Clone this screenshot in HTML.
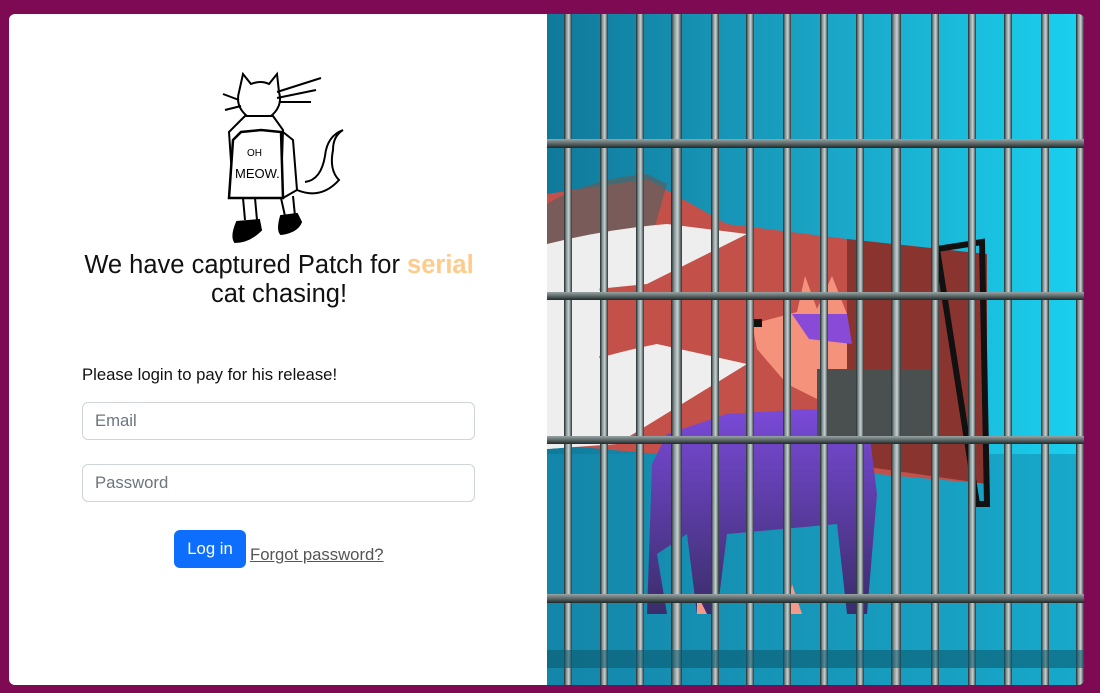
<!DOCTYPE html>
<html><head><meta charset="utf-8"><style>
html,body{margin:0;padding:0}
body{width:1100px;height:693px;background:#7d0a52;position:relative;overflow:hidden;font-family:"Liberation Sans","DejaVu Sans",sans-serif}
.card{position:absolute;left:9px;top:14px;width:1075px;height:671px;background:#fff;border-radius:6px;overflow:hidden}
.right{position:absolute;left:538px;top:0;width:537px;height:671px}
h1{position:absolute;left:40px;width:460px;top:237px;margin:0;text-align:center;font-weight:normal;font-size:25.5px;line-height:29px;color:#111}
h1 span{color:#fecb8b;font-weight:bold}
.p{position:absolute;left:73px;top:351px;font-size:16.7px;color:#111}
.in{position:absolute;left:73px;width:393px;height:38px;border:1px solid #ced4da;border-radius:6px;box-sizing:border-box;padding:0 12px;font-size:16.7px;line-height:36px;color:#6c757d}
.btn{position:absolute;left:165px;top:516px;width:72px;height:38px;background:#0d6efd;border-radius:6px;color:#fff;font-size:16.7px;line-height:38px;text-align:center}
.fp{position:absolute;left:241px;top:531px;font-size:16.7px;color:#555;text-decoration:underline}
</style></head><body>
<div class="card">
<svg style="position:absolute;left:212px;top:56px" width="130" height="180" viewBox="0 0 130 180" fill="none" stroke="#000" stroke-width="2">
<path d="M18 22 L22 4 L30 14 Q40 10 48 14 L56 4 L58 22 Q62 36 50 46 Q38 52 26 46 Q14 36 18 22Z"/>
<path d="M56 22 L100 8 M56 28 L95 20 M58 32 L90 32 M18 30 L2 24 M20 36 L4 40"/>
<path d="M24 46 L8 62 L12 120 Q30 128 60 120 L62 60 L52 46Z" fill="#fff"/>
<path d="M12 70 L20 62 L40 60 L60 62 L62 128 L8 128 Z" fill="#fff" stroke-width="2.5"/>
<text x="26" y="86" font-size="10" fill="#000" stroke="none" font-family="Liberation Sans">OH</text>
<text x="14" y="108" font-size="13" fill="#000" stroke="none" font-family="Liberation Sans">MEOW.</text>
<path d="M62 62 L72 70 L76 120 L62 128"/>
<path d="M76 120 Q100 130 118 110 Q108 100 112 80 Q112 66 122 60 Q106 66 104 86 Q100 110 84 112"/>
<path d="M22 128 L24 150 M34 128 L36 150 M60 128 L64 146 M72 126 L74 146"/>
<path d="M16 152 Q10 166 14 172 Q28 172 40 160 L38 150 Z M60 146 Q56 160 60 164 Q76 162 80 152 L76 144 Z" fill="#000"/>
</svg>
<h1>We have captured Patch for <span>serial</span><br>cat chasing!</h1>
<div class="p">Please login to pay for his release!</div>
<div class="in" style="top:388px">Email</div>
<div class="in" style="top:450px">Password</div>
<div class="btn">Log in</div>
<div class="fp">Forgot password?</div>
<svg class="right" viewBox="0 0 537 671">
<defs>
<linearGradient id="bg" x1="0" x2="1"><stop offset="0" stop-color="#10799a"/><stop offset="0.5" stop-color="#1aa3c4"/><stop offset="1" stop-color="#1ad0ef"/></linearGradient>
<linearGradient id="bar" x1="0" x2="1"><stop offset="0" stop-color="#1c2a2c"/><stop offset="0.3" stop-color="#8a9798"/><stop offset="0.6" stop-color="#c9d1d1"/><stop offset="1" stop-color="#2a3536"/></linearGradient>
<linearGradient id="hb" x1="0" y1="0" x2="0" y2="1"><stop offset="0" stop-color="#9aa4a5"/><stop offset="0.5" stop-color="#5d6869"/><stop offset="1" stop-color="#1f2829"/></linearGradient>
<linearGradient id="dog" x1="0" y1="0" x2="0" y2="1"><stop offset="0" stop-color="#7a4ad8"/><stop offset="1" stop-color="#3a2d6a"/></linearGradient>
</defs>
<rect width="537" height="671" fill="url(#bg)"/>
<rect y="440" width="537" height="231" fill="#1590b2" opacity="0.6"/>
<path d="M0 180 L100 165 L180 210 L420 240 L440 470 L0 430Z" fill="#c4504a"/>
<path d="M300 225 L440 240 L440 470 L300 450Z" fill="#8a3430"/>
<path d="M0 190 Q40 165 100 160 L120 170 L100 240 L0 260Z" fill="#5a5f60" opacity="0.7"/>
<path d="M390 235 L435 228 L440 490 L430 490Z" fill="none" stroke="#111" stroke-width="6"/>
<path d="M0 230 Q60 215 120 210 L200 220 L100 270 L0 280Z" fill="#eeeeee"/>
<path d="M0 360 Q60 340 110 330 L200 350 L70 430 L0 435Z" fill="#eeeeee"/>
<path d="M50 270 Q60 290 60 320 L50 350 L60 430 L0 435 L0 280Z" fill="#eeeeee"/>
<path d="M120 420 L180 400 L260 395 L320 400 L330 480 L320 600 L300 600 L290 510 L180 520 L170 600 L150 600 L140 520 L110 540 L120 600 L100 600 L105 450Z" fill="url(#dog)"/>
<path d="M205 310 L250 298 L258 262 L270 295 L285 262 L300 300 L300 400 L240 370 L210 335Z" fill="#f4927c"/>
<path d="M245 300 L300 300 L305 330 L262 325Z" fill="#8a4ad8"/>
<path d="M150 580 L160 600 L150 600Z M245 570 L255 600 L240 600Z" fill="#f49a8a"/>
<rect x="205" y="305" width="10" height="8" fill="#111"/>
<rect x="270" y="355" width="120" height="75" fill="#4a5050"/>
<g fill="url(#bar)">
<rect x="17" width="8" height="671"/><rect x="53" width="8" height="671"/><rect x="89" width="8" height="671"/>
<rect x="124" width="11" height="671"/><rect x="164" width="8" height="671"/><rect x="199" width="8" height="671"/>
<rect x="236" width="8" height="671"/><rect x="273" width="8" height="671"/><rect x="309" width="8" height="671"/>
<rect x="344" width="10" height="671"/><rect x="384" width="8" height="671"/><rect x="421" width="8" height="671"/>
<rect x="457" width="8" height="671"/><rect x="494" width="8" height="671"/><rect x="529" width="8" height="671"/>
</g>
<g fill="url(#hb)">
<rect y="125" width="537" height="9"/><rect y="278" width="537" height="8"/><rect y="422" width="537" height="8"/><rect y="580" width="537" height="9"/>
</g>
<rect y="636" width="537" height="18" fill="#0c5a70" opacity="0.6"/>
</svg>
</div>
</body></html>
